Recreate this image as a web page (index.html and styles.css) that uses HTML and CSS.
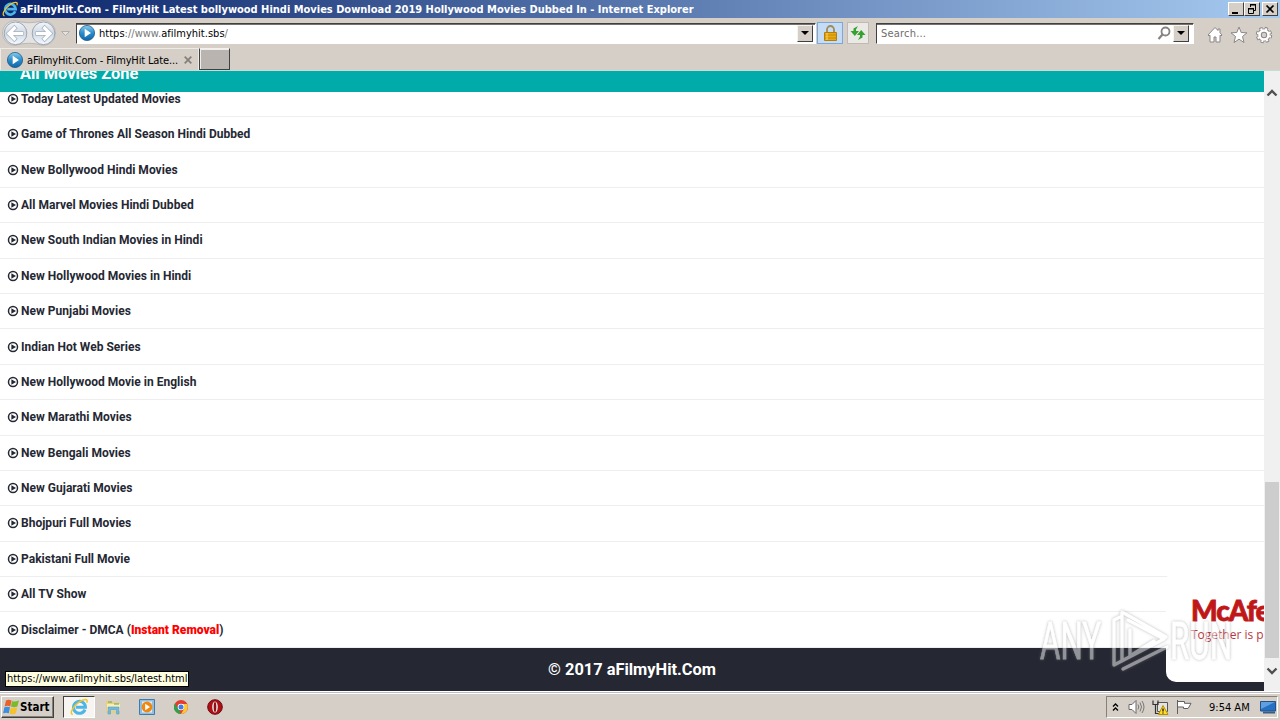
FILE: index.html
```
<!DOCTYPE html>
<html lang="en">
<head>
  <meta charset="UTF-8">
  <title>aFilmyHit.Com - FilmyHit Latest bollywood Hindi Movies Download 2019</title>
  <link rel="stylesheet" href="styles.css">
</head>
<body>
  <svg width="0" height="0" class="defs">
    <defs>
      <linearGradient id="blueBall" x1="0" y1="0" x2="0" y2="1"><stop offset="0" stop-color="#8accee"/><stop offset=".5" stop-color="#2b8dcb"/><stop offset="1" stop-color="#0f65a5"/></linearGradient>
      <linearGradient id="navBall" x1="0" y1="0" x2="0" y2="1"><stop offset="0" stop-color="#f4f7fa"/><stop offset=".5" stop-color="#cfd8e2"/><stop offset="1" stop-color="#f6fbff"/></linearGradient>
      <symbol id="play-circle" viewBox="0 0 12 12">
        <circle cx="6" cy="6" r="4.5" fill="none" stroke="#252833" stroke-width="1.500"/>
        <path d="M4.400 3.300v5.400L9 6z" fill="#252833"/>
      </symbol>
      <symbol id="favicon" viewBox="0 0 16 16">
        <circle cx="8" cy="8" r="7.600" fill="url(#blueBall)" stroke="#1c5c8c" stroke-width=".8"/>
        <path d="M5.700 3.700v8.600L12 8z" fill="#fff"/>
      </symbol>
      <symbol id="ie" viewBox="0 0 16 16">
        <path d="M13.300 10.300A5.300 5.300 0 1 1 13.700 8.200H5.200" fill="none" stroke="#4db5e8" stroke-width="2.700"/>
        <path d="M2.500 14.800C-1 14 2.800 7.300 8 3.700 12.500.500 16.500.500 14.900 4.200" fill="none" stroke="#f0c62d" stroke-width="1.300"/>
      </symbol>
    </defs>
  </svg>

  <div class="window">
    <header class="titlebar">
      <svg class="title-icon" width="16" height="16"><use href="#ie"/></svg>
      <span class="title-text">aFilmyHit.Com - FilmyHit Latest bollywood Hindi Movies Download 2019 Hollywood Movies Dubbed In - Internet Explorer</span>
      <div class="win-buttons">
        <span class="win-btn"><svg width="14" height="12"><path d="M3 9h6v2H3z"/></svg></span>
        <span class="win-btn"><svg width="14" height="12" fill="none" stroke="#000"><path d="M5 2h6M5.500 2v2M10.500 2v5.500H9M3 6h6M3.500 6v4.500h5V6"/><path d="M5 1.500h6M3 5.500h6"/></svg></span>
        <span class="win-btn close"><svg width="14" height="12"><path d="M3.500 2.500l7 7M10.500 2.500l-7 7" stroke="#000" stroke-width="1.700"/></svg></span>
      </div>
    </header>

    <div class="navbar">
      <svg class="history" width="72" height="30" viewBox="0 0 72 30">
        <path d="M15 2.500Q29 7 43 2.500A12.500 12.500 0 0 1 43 27.500Q29 23 15 27.500A12.500 12.500 0 0 1 15 2.500z" fill="#e4e3e3" stroke="#bbb7b4"/>
        <circle cx="15.500" cy="15.300" r="11.300" fill="url(#navBall)" stroke="#9aa5b2"/>
        <circle cx="43.500" cy="15.300" r="11.300" fill="url(#navBall)" stroke="#9aa5b2"/>
        <path d="M23.500 15.500H9.500M16 8.500l-7 7 7 7" fill="none" stroke="#a4b1c0" stroke-width="4.600"/>
        <path d="M23 15.500H9.500M15.500 9l-6.500 6.500 6.500 6.500" fill="none" stroke="#fff" stroke-width="3.200"/>
        <path d="M35.500 15.500h14M43 8.500l7 7-7 7" fill="none" stroke="#a4b1c0" stroke-width="4.600"/>
        <path d="M36 15.500h13.500M43.500 9l6.500 6.500-6.500 6.500" fill="none" stroke="#fff" stroke-width="3.200"/>
        <path d="M61.500 13.500h8l-4 4z" fill="#e6e2de" stroke="#b3aeaa"/>
      </svg>
      <div class="address">
        <svg width="16" height="16"><use href="#favicon"/></svg>
        <span class="url">https<i>://www.</i>afilmyhit.sbs<i>/</i></span>
        <span class="drop"><svg width="8" height="5"><path d="M0 0h8L4 4z"/></svg></span>
      </div>
      <div class="lock">
        <svg width="15" height="17" viewBox="0 0 15 17"><path d="M4 8V4.500a3.500 3.500 0 0 1 7 0V8" fill="none" stroke="#a18b55" stroke-width="1.800"/><path d="M1.500 7.500h12v8h-12z" fill="#e9a910" stroke="#b57e0c"/><path d="M2 10h11M2 13h11" stroke="#c68b0a"/><path d="M4 8v7" stroke="#ffd75e"/></svg>
      </div>
      <div class="refresh">
        <svg width="16" height="16" viewBox="0 0 16 16"><path d="M8 1L3.500 3.500V6H.500l4.300 5L9 6H6V4.500zM8 15l4.500-2.500V10h3l-4.300-5L7 10h3v1.500z" fill="#35a12f"/></svg>
      </div>
      <div class="search">
        <span>Search...</span>
        <svg width="15" height="15" viewBox="0 0 15 15" fill="none" stroke="#85827f"><circle cx="8.500" cy="5.500" r="4" stroke-width="1.800"/><path d="M5.500 8.500L1.500 13" stroke-width="2.200"/></svg>
        <span class="drop"><svg width="8" height="5"><path d="M0 0h8L4 4z"/></svg></span>
      </div>
      <div class="tools">
        <svg width="16" height="18" viewBox="0 0 16 18"><path d="M8 1.500L1 9l1 1 1-.8V16h4v-5h2v5h4V9.200l1 .8 1-1-2-2.200V3h-2v1.500z" fill="#fff" stroke="#8b8785"/></svg>
        <svg width="18" height="18" viewBox="0 0 18 18"><path d="M9 1l2.200 5.500 5.800.3-4.500 3.700 1.500 6-5-3.300-5 3.300 1.500-6L1 6.800l5.800-.3z" fill="#fff" stroke="#8b8785"/></svg>
        <svg width="18" height="18" viewBox="0 0 18 18"><g fill="none"><circle cx="9" cy="9" r="6.400" stroke="#8b8785" stroke-width="3.600" stroke-dasharray="2.900 2.126"/><circle cx="9" cy="9" r="4.400" stroke="#8b8785" stroke-width="4.400"/><circle cx="9" cy="9" r="6.200" stroke="#fff" stroke-width="2" stroke-dasharray="1.900 2.969" stroke-dashoffset="-.5"/><circle cx="9" cy="9" r="4.500" stroke="#fff" stroke-width="2.600"/></g></svg>
      </div>
    </div>

    <div class="tabs">
      <div class="tab">
        <svg width="16" height="16"><use href="#favicon"/></svg>
        <span>aFilmyHit.Com - FilmyHit Late...</span>
        <svg class="tab-close" width="8" height="8"><path d="M.700.700l6.600 6.600M7.300.700L.700 7.300" stroke="#85807c" stroke-width="1.800"/></svg>
      </div>
      <div class="new-tab"></div>
    </div>

    <div class="view">
      <main class="page">
        <h2 class="zone"><span>All Movies Zone</span></h2>
        <ul class="list">
          <li><svg width="12" height="12"><use href="#play-circle"/></svg>Today Latest Updated Movies</li>
          <li><svg width="12" height="12"><use href="#play-circle"/></svg>Game of Thrones All Season Hindi Dubbed</li>
          <li><svg width="12" height="12"><use href="#play-circle"/></svg>New Bollywood Hindi Movies</li>
          <li><svg width="12" height="12"><use href="#play-circle"/></svg>All Marvel Movies Hindi Dubbed</li>
          <li><svg width="12" height="12"><use href="#play-circle"/></svg>New South Indian Movies in Hindi</li>
          <li><svg width="12" height="12"><use href="#play-circle"/></svg>New Hollywood Movies in Hindi</li>
          <li><svg width="12" height="12"><use href="#play-circle"/></svg>New Punjabi Movies</li>
          <li><svg width="12" height="12"><use href="#play-circle"/></svg>Indian Hot Web Series</li>
          <li><svg width="12" height="12"><use href="#play-circle"/></svg>New Hollywood Movie in English</li>
          <li><svg width="12" height="12"><use href="#play-circle"/></svg>New Marathi Movies</li>
          <li><svg width="12" height="12"><use href="#play-circle"/></svg>New Bengali Movies</li>
          <li><svg width="12" height="12"><use href="#play-circle"/></svg>New Gujarati Movies</li>
          <li><svg width="12" height="12"><use href="#play-circle"/></svg>Bhojpuri Full Movies</li>
          <li><svg width="12" height="12"><use href="#play-circle"/></svg>Pakistani Full Movie</li>
          <li><svg width="12" height="12"><use href="#play-circle"/></svg>All TV Show</li>
          <li><svg width="12" height="12"><use href="#play-circle"/></svg><span>Disclaimer - DMCA (<b class="red">Instant Removal</b>)</span></li>
        </ul>
        <footer class="footer">© 2017 aFilmyHit.Com</footer>
        <div class="mcafee">
          <div class="mcafee-name">McAfee</div>
          <div class="mcafee-sub">Together is power</div>
        </div>
        <div class="status">https://www.afilmyhit.sbs/latest.html</div>
      </main>
      <div class="scrollbar">
        <svg width="12" height="8" viewBox="0 0 12 8"><path d="M1.500 6.500L6 2l4.500 4.500" fill="none" stroke="#505050" stroke-width="2.400"/></svg>
        <div class="thumb"></div>
        <svg width="12" height="8" viewBox="0 0 12 8"><path d="M1.500 1.500L6 6l4.500-4.500" fill="none" stroke="#505050" stroke-width="2.400"/></svg>
      </div>
    </div>

    <div class="taskbar">
      <div class="start">
        <svg width="16" height="16" viewBox="0 0 16 16"><path d="M3 1.500q2.500-1.500 5.500 0L7.300 7.500q-3-1.300-5.700 0z" fill="#e8602c"/><path d="M9 2q2.500 1.300 7-.5L14.300 7.500q-3 1.500-6.300 0z" fill="#7db928"/><path d="M1.400 8.300q2.800-1.300 5.600 0l-1.200 6q-2.600-1.300-5.700 0z" fill="#3b8fdc"/><path d="M7.800 8.500q3 1.300 6.400 0l-1.500 6q-3 1.300-6.200 0z" fill="#f6c12b"/></svg>
        <span>Start</span>
      </div>
      <div class="quick">
        <span class="task active"><svg width="18" height="18" viewBox="0 0 16 16"><use href="#ie"/></svg></span>
        <span class="task"><svg width="17" height="17" viewBox="0 0 17 17"><path d="M1 2h6l1 1.500h7V14H1z" fill="#e9cf79"/><path d="M2 5h13v7H2z" fill="#f9edb6"/><path d="M3 3h4M9 5h5" stroke="#58aa65"/><path d="M3 8h11v7h-2.500v-4h-6v4H3z" fill="#73b9dc" stroke="#5a9fc5" stroke-width=".6"/></svg></span>
        <span class="task"><svg width="16" height="16" viewBox="0 0 16 16"><path d="M.500.500h15v15H.500z" fill="#91bfe0" stroke="#3e7cb0"/><path d="M3 2.500h10v11H3z" fill="#dcecf7"/><circle cx="8" cy="8" r="5.400" fill="#f08710"/><path d="M6.200 4.800v6.400L11 8z" fill="#fff"/></svg></span>
        <span class="task"><svg width="14" height="14" viewBox="0 0 14 14"><circle cx="7" cy="7" r="7" fill="#e33d30"/><path d="M.900 3.500L5 10l2 4A7 7 0 0 1 .900 3.500z" fill="#2ba24c"/><path d="M7 14a7 7 0 0 0 6.100-10H7l3 5z" fill="#fcc934"/><circle cx="7" cy="7" r="3.300" fill="#fff"/><circle cx="7" cy="7" r="2.500" fill="#3d7de8"/></svg></span>
        <span class="task"><svg width="16" height="16" viewBox="0 0 16 16"><circle cx="8" cy="8" r="7.300" fill="#ae1016" stroke="#6f090c"/><ellipse cx="8" cy="8" rx="2.800" ry="5.500" fill="#eee"/><ellipse cx="8" cy="8" rx="1.300" ry="5" fill="#8d1114"/></svg></span>
      </div>
      <div class="tray">
        <svg width="7" height="9" viewBox="0 0 7 9" fill="none" stroke="#000" stroke-width="1.300"><path d="M1 3.500l2.500-2.500L6 3.500M1 7.500L3.500 5 6 7.500"/></svg>
        <svg width="17" height="16" viewBox="0 0 17 16"><path d="M1 5.500h3l4-4v13l-4-4H1z" fill="#fff" stroke="#686868"/><path d="M10 5.500q1.500 2.500 0 5M12 3.500q3 4.500 0 9M14 2q4 6 0 12" fill="none" stroke="#777"/></svg>
        <svg width="17" height="16" viewBox="0 0 17 16"><path d="M5.500 3.500h10v9h-10z" fill="#e3e3e3" stroke="#555"/><path d="M1 1.500v4h5v-4M3.500 5.500v9H8" fill="none" stroke="#333" stroke-width="1.200"/><path d="M11 6.500l5 9H6.500z" fill="#ffdc25" stroke="#b79000"/><path d="M11 9.500v3M11 13.500v1" stroke="#000" stroke-width="1.200"/></svg>
        <svg width="17" height="16" viewBox="0 0 17 16"><path d="M1.500 1v14M2 2.500h6.500v1.800H15L13 8l-1 1.500H7.500V8H2" fill="#fff" stroke="#606060"/></svg>
        <span class="clock">9:54 AM</span>
        <svg width="16" height="13" viewBox="0 0 16 13"><path d="M.500.500h15v9.500H.500z" fill="#2470c4" stroke="#265087"/><path d="M1 1h14L1 8z" fill="#5d9fe0"/><path d="M3 11.500h12" stroke="#385d87" stroke-width="2"/></svg>
      </div>
    </div>

    <svg class="watermark" width="200" height="70" viewBox="0 0 200 70">
      <g class="mark-text">
        <text x="4" y="51" textLength="61" lengthAdjust="spacingAndGlyphs">ANY</text>
        <text x="134" y="51" textLength="62" lengthAdjust="spacingAndGlyphs">RUN</text>
      </g>
      <path class="mark-logo" d="M86 53V4l44 25M84 9l-6 3v45l50-26L92 12M94 22v26l24-15M87 61l44-22"/>
    </svg>
  </div>
</body>
</html>
```
FILE: styles.css
```
* {
  box-sizing: border-box;
}

body {
  margin: 0;
  font-family: Tahoma, "DejaVu Sans Condensed", "DejaVu Sans", sans-serif;
  font-size: 11px;
  color: #000;
  background: #d5cfc8;
  overflow: hidden;
}

svg {
  display: block;
  flex: none;
}

.defs {
  position: absolute;
}

.window {
  width: 1280px;
  height: 720px;
  display: flex;
  flex-direction: column;
  position: relative;
  overflow: hidden;
  white-space: nowrap;
}

/* title bar */
.titlebar {
  height: 18px;
  display: flex;
  align-items: center;
  padding: 0 2px;
  background: linear-gradient(to right, #0a246a, #a6caf0);
  color: #fff;
}

.title-text {
  margin-left: 2px;
  font-weight: bold;
  letter-spacing: -0.01px;
}

.win-buttons {
  display: flex;
  margin-left: auto;
}

.win-btn {
  width: 16px;
  height: 14px;
  background: #d5cfc8;
  border: 1px solid;
  border-color: #fff #404040 #404040 #fff;
}

.win-btn.close {
  margin-left: 2px;
}

/* address row */
.navbar {
  height: 30px;
  display: flex;
  align-items: center;
}

.address,
.search {
  height: 21px;
  display: flex;
  align-items: center;
  background: #fff;
  border: 1px solid;
  border-color: #404040 #fff #fff #404040;
  box-shadow: inset 0 1px #77706e;
}

.address {
  width: 740px;
  margin-left: 4px;
  padding: 0 2px;
}

.url {
  margin-left: 4px;
  letter-spacing: 0.02px;
}

.url i {
  font-style: normal;
  color: #777;
}

.drop {
  width: 16px;
  height: 17px;
  display: flex;
  align-items: center;
  justify-content: center;
  margin-left: auto;
  background: #d5cfc8;
  border: 1px solid;
  border-color: #f6f4f0 #404040 #404040 #f6f4f0;
}

.lock,
.refresh {
  display: flex;
  align-items: center;
  justify-content: center;
  height: 22px;
}

.lock {
  width: 26px;
  margin-left: 1px;
  background: #c5dcf5;
  border: 1px solid #7aa7dc;
}

.refresh {
  width: 22px;
  margin-left: 4px;
  background: #ebe9e6;
  border: 1px solid #c0bab4;
}

.search {
  width: 318px;
  margin-left: 7px;
  padding: 0 4px;
  color: #6d6d6d;
  letter-spacing: 0.2px;
}

.search > svg {
  margin-left: auto;
}

.search .drop {
  margin-left: 1px;
}

.tools {
  display: flex;
  gap: 7px;
  margin: 4px 0 0 13px;
}

/* tab row */
.tabs {
  height: 23px;
  display: flex;
  border-bottom: 1px solid #c7dcd4;
}

.tab {
  width: 199px;
  display: flex;
  align-items: center;
  padding: 1px 0 0 6px;
  border: 1px solid #eeeae6;
  border-bottom: 0;
}

.tab span {
  margin-left: 4px;
  letter-spacing: -0.15px;
}

.tab-close {
  margin-left: 6px;
}

.new-tab {
  width: 31px;
  height: 22px;
  background: #b9b4af;
  border: 1px solid;
  border-color: #f4f0ee #404040 #404040 #404040;
  box-shadow: inset 1px 1px #eee;
}

/* web page */
.view {
  height: 620px;
  display: flex;
}

.page {
  position: relative;
  width: 1264px;
  height: 620px;
  overflow: hidden;
  background: #fff;
  font-family: Roboto, sans-serif;
}

.zone {
  position: relative;
  z-index: 1;
  display: flex;
  align-items: flex-end;
  height: 21px;
  margin: 0;
  padding: 0 20px;
  overflow: hidden;
  background: #00aba9;
  color: #fff;
  font-size: 16.4px;
  line-height: 36px;
}

.list {
  margin: -10.4px 0 0;
  padding: 0;
  list-style: none;
  font-size: 12px;
  font-weight: bold;
  letter-spacing: 0.02px;
  color: #252833;
}

.list li {
  display: flex;
  align-items: center;
  height: 35.4px;
  padding-left: 7px;
  border-bottom: 1px solid #eee;
}

.list svg {
  margin-right: 2px;
}

.red {
  color: #f00;
}

.footer {
  height: 43px;
  line-height: 43px;
  background: #252833;
  color: #fff;
  font-size: 16.4px;
  font-weight: bold;
  text-align: center;
}

.mcafee {
  position: absolute;
  left: 1166px;
  top: 500px;
  width: 150px;
  height: 111px;
  padding: 22px 0 0 25px;
  background: #fff;
  border-radius: 10px;
}

.mcafee-name {
  font-family: Lato, sans-serif;
  font-size: 28px;
  font-weight: 900;
  line-height: 35px;
  letter-spacing: -1px;
  color: #c01818;
  -webkit-text-stroke: 0.8px #c01818;
}

.mcafee-sub {
  font-family: "Open Sans", sans-serif;
  font-size: 12px;
  line-height: 14px;
  color: #b8383d;
}

.status {
  position: absolute;
  left: 5px;
  bottom: 4px;
  height: 16px;
  padding: 0 1px;
  line-height: 14px;
  letter-spacing: -0.04px;
  background: #ffffe1;
  border: 1px solid #000;
  font-family: Tahoma, "DejaVu Sans Condensed", sans-serif;
}

.scrollbar {
  width: 16px;
  display: flex;
  flex-direction: column;
  align-items: center;
  padding: 18px 0 16px;
  background: #f0f0f0;
}

.thumb {
  width: 14px;
  height: 176px;
  margin: auto 0 9px;
  background: #cdcdcd;
}

/* taskbar */
.taskbar {
  height: 29px;
  display: flex;
  align-items: center;
  padding: 2px 2px 0 1px;
  background: #d5cfc8;
  border-top: 1px solid #fff;
  box-shadow: inset 0 1px #c0bcc0, inset 0 2px #fff;
}

.start {
  width: 53px;
  height: 22px;
  display: flex;
  align-items: center;
  padding-left: 1px;
  border: 1px solid;
  border-color: #fff #404040 #404040 #fff;
  box-shadow: inset -1px -1px #858078;
  font-weight: bold;
  font-size: 11.5px;
}

.start span {
  margin-left: 1px;
}

.quick {
  display: flex;
  gap: 2px;
  margin-left: 9px;
}

.task {
  width: 32px;
  height: 22px;
  display: flex;
  align-items: center;
  justify-content: center;
}

.task.active {
  background: #f6f5f2;
  border: 1px solid;
  border-color: #404040 #fff #fff #404040;
}

.tray {
  width: 172px;
  height: 22px;
  display: flex;
  align-items: center;
  margin-left: auto;
  padding-left: 5px;
  border: 1px solid;
  border-color: #858078 #fff #fff #858078;
}

.tray svg + svg {
  margin-left: 7px;
}

.tray svg:nth-child(2) {
  margin-left: 9px;
}

.clock {
  width: 42px;
  margin: 0 9px 0 16px;
}

/* watermark over the whole screen */
.watermark {
  position: absolute;
  left: 1036px;
  top: 608px;
  opacity: 0.5;
  filter: drop-shadow(0 0 1.5px #777);
}

.mark-text {
  font-family: Roboto, sans-serif;
  font-size: 52px;
  fill: #fff;
  stroke: #fff;
  stroke-width: 0.8;
}

.mark-logo {
  fill: none;
  stroke: #fff;
  stroke-width: 3.4;
  stroke-linejoin: round;
  stroke-linecap: round;
}
```
